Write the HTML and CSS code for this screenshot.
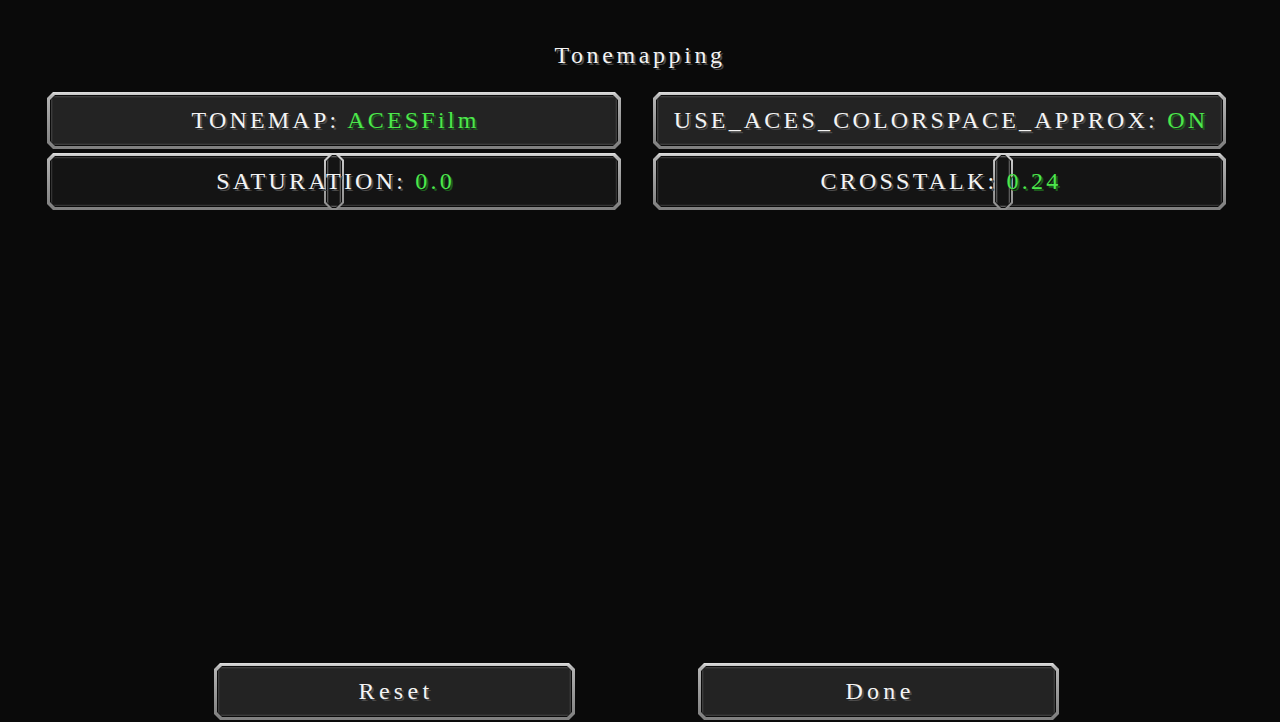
FILE: index.html
```html
<!DOCTYPE html>
<html>
<head>
<meta charset="utf-8">
<link rel="stylesheet" href="styles.css">
</head>
<body>
<div class="screen">
  <h1 class="title">Tonemapping</h1>
  <div class="grid">
    <div class="frame btn">
      <div class="frame-mid"><div class="frame-face">
        <span class="label">TONEMAP: <span class="val">ACESFilm</span></span>
      </div></div>
    </div>
    <div class="frame btn">
      <div class="frame-mid"><div class="frame-face">
        <span class="label">USE_ACES_COLORSPACE_APPROX: <span class="val">ON</span></span>
      </div></div>
    </div>
    <div class="slider">
      <div class="frame track"><div class="frame-mid"><div class="frame-face"></div></div></div>
      <div class="frame handle" style="--v:0.5"><div class="frame-mid"><div class="frame-face"></div></div></div>
      <span class="label slider-label">SATURATION: <span class="val">0.0</span></span>
    </div>
    <div class="slider">
      <div class="frame track"><div class="frame-mid"><div class="frame-face"></div></div></div>
      <div class="frame handle" style="--v:0.615"><div class="frame-mid"><div class="frame-face"></div></div></div>
      <span class="label slider-label">CROSSTALK: <span class="val">0.24</span></span>
    </div>
  </div>
  <div class="footer">
    <div class="frame btn bottom">
      <div class="frame-mid"><div class="frame-face">
        <span class="label wide">Reset</span>
      </div></div>
    </div>
    <div class="frame btn bottom">
      <div class="frame-mid"><div class="frame-face">
        <span class="label wide">Done</span>
      </div></div>
    </div>
  </div>
</div>
</body>
</html>
```

FILE: styles.css
```css
html, body {
  margin: 0;
  padding: 0;
  background: #0a0a0a;
}
body {
  font-family: "Liberation Serif", "Times New Roman", serif;
  color: #f4f4f4;
  overflow: hidden;
}
.screen {
  width: 1280px;
  height: 722px;
  display: flex;
  flex-direction: column;
  box-sizing: border-box;
}
.title {
  margin: 0;
  padding: 41px 0 23px 0;
  font-size: 24px;
  line-height: 28px;
  font-weight: normal;
  text-align: center;
  letter-spacing: 3.6px;
  text-shadow: 2px 2px 0 #4a4a4a;
}
.grid {
  margin-left: 47px;
  width: 1179px;
  display: grid;
  grid-template-columns: 574px 573px;
  column-gap: 32px;
  row-gap: 4px;
}
.frame {
  --c: 6px;
  clip-path: polygon(var(--c) 0, calc(100% - var(--c)) 0, 100% var(--c), 100% calc(100% - var(--c)), calc(100% - var(--c)) 100%, var(--c) 100%, 0 calc(100% - var(--c)), 0 var(--c));
  background: linear-gradient(#e0e0e0, #b4b4b4 8%, #9a9a9a 50%, #7e7e7e);
  padding: 3px;
  box-sizing: border-box;
  height: 57px;
}
.frame-mid {
  --c: 5px;
  clip-path: polygon(var(--c) 0, calc(100% - var(--c)) 0, 100% var(--c), 100% calc(100% - var(--c)), calc(100% - var(--c)) 100%, var(--c) 100%, 0 calc(100% - var(--c)), 0 var(--c));
  background: #0b0b0b;
  padding: 1px;
  height: 100%;
  box-sizing: border-box;
}
.frame-face {
  --c: 4px;
  clip-path: polygon(var(--c) 0, calc(100% - var(--c)) 0, 100% var(--c), 100% calc(100% - var(--c)), calc(100% - var(--c)) 100%, var(--c) 100%, 0 calc(100% - var(--c)), 0 var(--c));
  background: #232323;
  box-shadow: inset 0 0 0 1px #3c3c3c, inset 0 0 0 2px #2c2c2c;
  height: 100%;
  box-sizing: border-box;
  display: flex;
  align-items: center;
  justify-content: center;
}
.label {
  font-size: 24px;
  line-height: 28px;
  letter-spacing: 3.2px;
  white-space: nowrap;
  text-shadow: 2px 2px 0 #4a4a4a;
  margin-top: -2px;
  margin-left: 3px;
}
.val {
  color: #4ce84c;
  text-shadow: 2px 2px 0 #1e5c1e;
}
.slider {
  position: relative;
  height: 57px;
  display: grid;
}
.slider > .track,
.slider > .slider-label {
  grid-area: 1 / 1;
}
.track .frame-face {
  background: #141414;
  box-shadow: inset 0 0 0 1px #343434, inset 0 0 0 2px #1c1c1c;
}
.slider-label {
  position: relative;
  z-index: 2;
  align-self: center;
  justify-self: center;
}
.handle {
  --c: 7px;
  position: absolute;
  top: 0;
  left: calc((100% - 20px) * var(--v));
  width: 20px;
  z-index: 1;
  padding: 2px;
  background: linear-gradient(#d4d4d4, #a8a8a8 50%, #8c8c8c);
}
.handle .frame-mid {
  --c: 6px;
}
.handle .frame-face {
  --c: 5px;
  background: #141414;
  box-shadow: inset 0 0 0 1px #5a5a5a, inset 0 0 0 2px #2a2a2a;
}
.footer {
  margin-top: auto;
  padding-bottom: 2px;
  padding-left: 214px;
  display: flex;
  gap: 123px;
}
.bottom {
  width: 361px;
}
.wide {
  letter-spacing: 4.3px;
}
```
